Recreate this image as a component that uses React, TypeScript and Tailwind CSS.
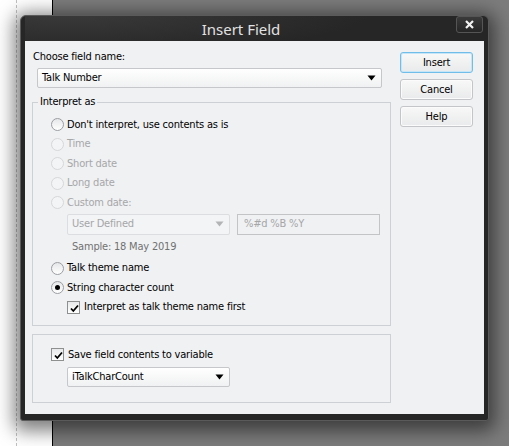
import React from "react";

const Arrow = ({ color = "#000" }: { color?: string }) => (
  <svg width="9" height="6" viewBox="0 0 9 6">
    <path d="M0.5 0.5 H8.5 L4.5 5.5 Z" fill={color} />
  </svg>
);

const Check = () => (
  <svg width="11" height="11" viewBox="0 0 11 11" className="absolute left-[1px] top-[1px]">
    <path d="M2 5.5 L4.3 8 L9 2.5" stroke="#000" strokeWidth="1.8" fill="none" />
  </svg>
);

const Radio = ({ label, disabled, checked }: { label: string; disabled?: boolean; checked?: boolean }) => (
  <div className="flex items-center h-[19.5px] pl-[18px]">
    <div
      className={`relative w-[13px] h-[13px] rounded-full border flex items-center justify-center ${
        disabled
          ? "border-[#d6d7d9] bg-[#f3f4f5]"
          : "border-[#9b9da1] bg-gradient-to-b from-[#e6e7e9] to-white"
      }`}
    >
      {checked && <div className="w-[5px] h-[5px] rounded-full bg-black" />}
    </div>
    <span className={`ml-[3px] ${disabled ? "text-[#a6a7a9]" : "text-black"}`}>{label}</span>
  </div>
);

const CheckBox = ({ label, indent }: { label: string; indent: string }) => (
  <div className={`flex items-center h-[19.5px] ${indent}`}>
    <div className="relative w-[13px] h-[13px] border border-[#8e8f8f] bg-gradient-to-b from-[#e8e9ea] to-white">
      <Check />
    </div>
    <span className="ml-[4px] text-black">{label}</span>
  </div>
);

const Button = ({ label, primary }: { label: string; primary?: boolean }) => (
  <div
    className={`h-[21px] w-[73px] rounded-[3px] border flex items-center justify-center bg-gradient-to-b from-[#f8f8f8] to-[#e9eaeb] ${
      primary ? "border-[#6fbde8] shadow-[inset_0_0_0_1px_#c6e6f8]" : "border-[#c3c5c8] shadow-[inset_0_0_0_1px_#fbfbfb]"
    }`}
  >
    {label}
  </div>
);

export default function App() {
  return (
    <div className="relative w-[509px] h-[446px] overflow-hidden flex font-['DejaVu_Sans_Condensed','Liberation_Sans',sans-serif] text-[11px] leading-[14px] tracking-[-0.2px]">
      <div className="w-[52px] h-full bg-white flex">
        <div className="ml-[16px] w-0 h-full border-l border-dashed border-[#c0c0c0]" />
      </div>
      <div className="w-px h-full bg-black" />
      <div className="flex-1 h-full bg-[#7c7c7c]" />

      {/* dialog window */}
      <div className="absolute left-[20px] top-[15px] w-[469px] h-[406px] rounded-t-[6px] rounded-b-[3px] bg-[#262626] border border-[#5a5a5a] shadow-[0_4px_18px_6px_rgba(0,0,0,0.5)] flex flex-col px-[4px] pb-[6px]">
        <div className="relative h-[25px] flex items-center bg-[radial-gradient(ellipse_300px_40px_at_10%_-10%,#3a3a3a,transparent)]">
          <div className="w-[432px] text-center text-[#e2e2e2] text-[15px] leading-[20px] tracking-normal font-['Noto_Sans','Open_Sans',sans-serif] pt-[1px]">
            Insert Field
          </div>
          <div className="absolute right-[1px] top-0 w-[27px] h-[17px] rounded-[3px] border border-[#555] bg-gradient-to-b from-[#3a3a3a] to-[#262626] flex items-center justify-center">
            <svg width="9" height="9" viewBox="0 0 9 9">
              <path d="M1 1 L8 8 M8 1 L1 8" stroke="#f2f2f2" strokeWidth="2.2" />
            </svg>
          </div>
        </div>

        <div className="flex-1 bg-[#f0f1f3] flex pl-[7px] pr-[11px] pt-[9px]">
          {/* left column */}
          <div className="w-[359px] flex flex-col">
            <div className="pl-[1px] text-black">Choose field name:</div>
            <div className="mt-[4px] ml-[5px] w-[345px] h-[20px] rounded-[2px] border border-[#c5c7cb] bg-gradient-to-b from-white to-[#f0f1f2] flex items-center justify-between pl-[4px] pr-[5px]">
              <span>Talk Number</span>
              <Arrow />
            </div>

            <fieldset className="mt-[7px] border border-[#cdd0d4] pb-[8px]">
              <legend className="ml-[5px] px-[2px] text-black">Interpret as</legend>
              <div className="pt-[6px]" />
              <Radio label="Don't interpret, use contents as is" />
              <Radio label="Time" disabled />
              <Radio label="Short date" disabled />
              <Radio label="Long date" disabled />
              <Radio label="Custom date:" disabled />
              <div className="flex mt-[1px] ml-[34px] gap-[7px]">
                <div className="w-[163px] h-[21px] rounded-[2px] border border-[#dcdde0] bg-[#f3f4f5] flex items-center justify-between pl-[4px] pr-[5px] text-[#a5a6a8]">
                  <span>User Defined</span>
                  <Arrow color="#b3b4b6" />
                </div>
                <div className="w-[143px] h-[21px] border border-[#c3c4c6] bg-[#f0f1f3] flex items-center pl-[6px] text-[#a5a6a8]">
                  %#d %B %Y
                </div>
              </div>
              <div className="mt-[5px] ml-[39px] text-[#707172]">Sample: 18 May 2019</div>
              <div className="mt-[5px]" />
              <Radio label="Talk theme name" />
              <Radio label="String character count" checked />
              <CheckBox label="Interpret as talk theme name first" indent="pl-[34px]" />
            </fieldset>

            <div className="mt-[8px] border border-[#cdd0d4] pt-[10px] pb-[15px]">
              <CheckBox label="Save field contents to variable" indent="pl-[18px]" />
              <div className="mt-[2px] ml-[34px] w-[163px] h-[20px] rounded-[2px] border border-[#c5c7cb] bg-gradient-to-b from-white to-[#f0f1f2] flex items-center justify-between pl-[4px] pr-[5px]">
                <span>iTalkCharCount</span>
                <Arrow />
              </div>
            </div>
          </div>

          {/* buttons */}
          <div className="ml-[9px] pt-[2px] flex flex-col gap-[6px]">
            <Button label="Insert" primary />
            <Button label="Cancel" />
            <Button label="Help" />
          </div>
        </div>
      </div>
    </div>
  );
}
